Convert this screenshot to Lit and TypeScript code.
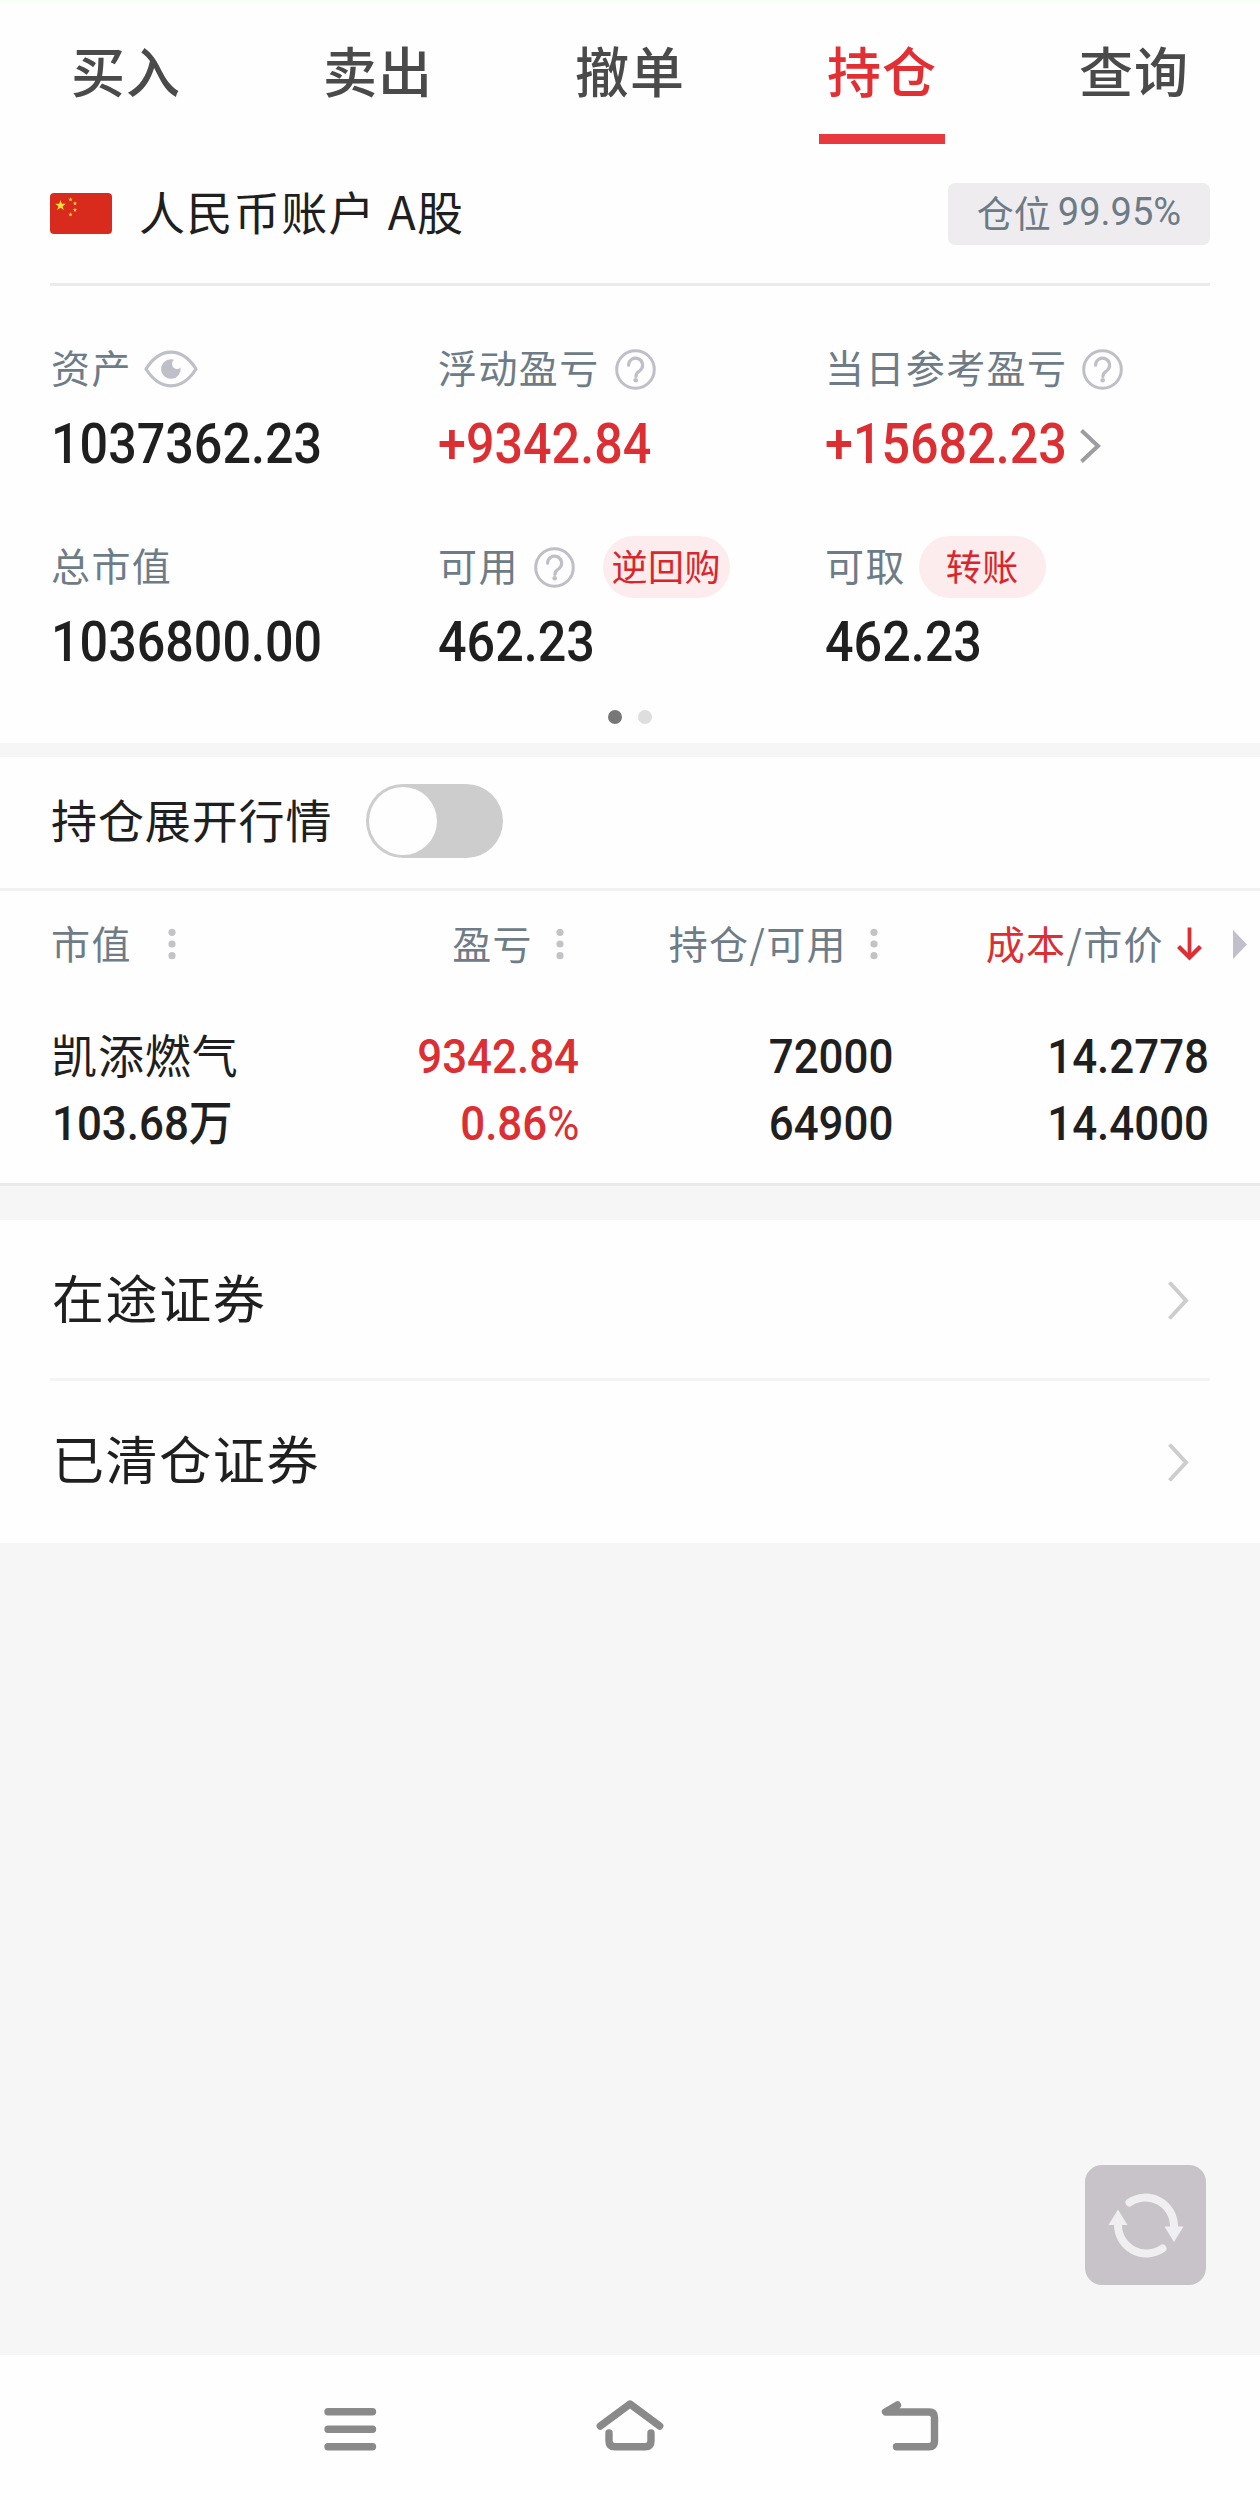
import { LitElement, html, css, svg, nothing } from "lit";
import { customElement, state } from "lit/decorators.js";
import { classMap } from "lit/directives/class-map.js";

interface Metric {
  label: string;
  value: string;
  tone?: "rise";
  eye?: boolean;
  help?: boolean;
  pill?: string;
  more?: boolean;
}

const TABS = ["买入", "卖出", "撤单", "持仓", "查询"];

const METRICS: Metric[] = [
  { label: "资产", value: "1037362.23", eye: true },
  { label: "浮动盈亏", value: "+9342.84", tone: "rise", help: true },
  { label: "当日参考盈亏", value: "+15682.23", tone: "rise", help: true, more: true },
  { label: "总市值", value: "1036800.00" },
  { label: "可用", value: "462.23", help: true, pill: "逆回购" },
  { label: "可取", value: "462.23", pill: "转账" },
];

const LINKS = ["在途证券", "已清仓证券"];

const star = (cx: number, cy: number, r: number) => {
  const pts: string[] = [];
  for (let i = 0; i < 10; i++) {
    const a = (Math.PI / 5) * i - Math.PI / 2;
    const k = i % 2 ? r * 0.4 : r;
    pts.push(`${(cx + k * Math.cos(a)).toFixed(2)},${(cy + k * Math.sin(a)).toFixed(2)}`);
  }
  return svg`<polygon points=${pts.join(" ")} fill="#fbe03a"/>`;
};

const flag = html`<svg class="flag" width="62" height="41" viewBox="0 0 62 41">
  <rect width="62" height="41" rx="4" fill="#d82b1e" />
  ${star(10.5, 12.5, 5.6)}${star(20.5, 6.5, 2.2)}${star(25, 10.5, 2.2)}${star(25, 17, 2.2)}${star(20.5, 21.5, 2.2)}
</svg>`;

const eye = html`<svg class="eye" width="54" height="38" viewBox="0 0 54 38">
  <path d="M2 19C9 8 17 2.2 27 2.2S45 8 52 19C45 30 37 35.8 27 35.8S9 30 2 19Z" fill="none" stroke="#bfbfca" stroke-width="3.2" stroke-linejoin="round" />
  <path d="M27 9.2a9.8 9.8 0 1 0 9.6 8.2a5 5 0 1 1-6.4-7.6A9.8 9.8 0 0 0 27 9.2Z" fill="#bfbfca" />
</svg>`;

const help = html`<svg class="help" width="41" height="41" viewBox="0 0 41 41" fill="none" stroke="#bfbfca" stroke-width="3">
  <circle cx="20.5" cy="20.5" r="18.8" />
  <path d="M13.6 16.2a7 7 0 1 1 11.6 5.2c-2.6 2.2-4.3 3-4.3 6" stroke-linecap="round" stroke-width="3.2" />
  <circle cx="20.7" cy="31.2" r="2.3" fill="#bfbfca" stroke="none" />
</svg>`;

const chevron = (color: string, w: number, h: number, sw: number) => html`<svg width=${w} height=${h} viewBox="0 0 ${w} ${h}" fill="none">
  <polyline points="1.5,1.5 ${w - 3},${h / 2} 1.5,${h - 1.5}" stroke=${color} stroke-width=${sw} />
</svg>`;

const kebab = html`<svg class="kebab" width="8" height="32" viewBox="0 0 8 32" fill="#c3c3c5">
  <circle cx="4" cy="4.3" r="3.6" /><circle cx="4" cy="16" r="3.6" /><circle cx="4" cy="27.7" r="3.6" />
</svg>`;

const arrowDown = html`<svg width="25" height="34" viewBox="0 0 25 34" fill="none" stroke="#dc2f33">
  <path d="M12.5 0.5V30" stroke-width="3.8" />
  <path d="M1.5 19.5L12.5 30.5L23.5 19.5" stroke-width="4.4" />
</svg>`;

const refresh = html`<svg width="76" height="66" viewBox="0 0 76 66">
  <g fill="none" stroke="#f0eef0" stroke-width="8" stroke-linecap="round">
    <path d="M21.5 10.5A28.5 28.5 0 0 1 66 33.5V36" />
    <path d="M54.5 56.5A28.5 28.5 0 0 1 10 32V29" />
  </g>
  <path d="M56.5 34.5H75.5L66 50Z" fill="#f0eef0" />
  <path d="M0.5 33H19.5L10 17.5Z" fill="#f0eef0" />
</svg>`;

@customElement("app-root")
export class AppRoot extends LitElement {
  @state() private active = 3;
  @state() private quotes = false;

  static styles = css`
    :host {
      display: block;
      width: 1260px;
      height: 2500px;
      font-family: "Noto Sans CJK SC", "Noto Sans", sans-serif;
      color: #1f1f1f;
      background: #f6f6f6;
    }
    * { box-sizing: border-box; }
    svg { display: block; flex: none; }
    .screen { position: relative; display: flex; flex-direction: column; height: 100%; white-space: nowrap; }
    .block { background: #fefefe; }

    .tabs { display: grid; grid-template-columns: repeat(5, 1fr); height: 144px; border-top: 3px solid #f7fdf7; }
    .tab { display: flex; flex-direction: column; align-items: center; justify-content: space-between; height: 141px; }
    .tab-text { height: 131px; line-height: 133px; font-size: 54px; font-weight: 500; letter-spacing: 1px; color: #4a4a4a; }
    .tab.on .tab-text { color: #e12f34; }
    .bar { width: 126px; height: 10px; }
    .tab.on .bar { background: #e8393e; }

    .account { display: flex; align-items: center; height: 142px; margin: 0 50px; border-bottom: 3px solid #ebebeb; }
    .account-name { flex: 1; margin-left: 27px; font-size: 46px; line-height: 66px; letter-spacing: 1.4px; padding-bottom: 8px; }
    .ratio { display: flex; align-items: center; justify-content: center; width: 262px; height: 62px; border-radius: 7px; background: #efecef; color: #6c7b85; font-size: 37px; gap: 7px; padding-bottom: 4px; }
    .ratio-num { font-family: Roboto, sans-serif; font-size: 38px; }

    .metrics { display: grid; grid-template-columns: 387px 387px 1fr; row-gap: 62px; padding: 52px 0 0 51px; }
    .label { display: flex; align-items: center; height: 62px; font-size: 39px; letter-spacing: 1.4px; color: #6e7c87; }
    .label-text { padding-bottom: 7px; }
    .eye { margin-left: 12px; }
    .help { margin-left: 15px; }
    .pill { display: flex; align-items: center; justify-content: center; width: 127px; height: 62px; border-radius: 31px; background: #fceced; color: #d9262c; font-size: 36px; letter-spacing: 0.6px; padding-bottom: 5px; margin-left: 13px; }
    .help + .pill { margin-left: 28px; }
    .value { display: flex; align-items: center; height: 60px; margin-top: 14px; }
    .num { font-family: Roboto, "Noto Sans CJK SC", sans-serif; font-weight: 500; transform: scaleX(0.914); }
    .value .num { font-size: 55px; line-height: 60px; transform-origin: left center; }
    .rise { color: #dc2f33; }
    .value svg { margin-left: -10px; margin-top: 3px; }
    .pager { display: flex; justify-content: center; gap: 16px; margin-top: 38px; height: 33px; }
    .dot { width: 14px; height: 14px; border-radius: 50%; background: #dedede; }
    .dot.on { background: #777; }

    .switch-row { display: flex; align-items: center; height: 134px; margin-top: 14px; padding: 0 51px 3px; border-bottom: 3px solid #f1f1f1; font-size: 46px; letter-spacing: 0.9px; }
    .switch-text { padding-bottom: 6px; }
    .toggle { width: 137px; height: 74px; margin-left: 34px; padding: 3px; border-radius: 37px; background: #cdcdcd; }
    .knob { width: 68px; height: 68px; border-radius: 50%; background: #fefefe; }

    .grid { display: grid; grid-template-columns: 249px 279px 314px 316px 51px; padding-left: 51px; }
    .head { height: 106px; align-items: center; font-size: 39px; letter-spacing: 1.4px; color: #6e7c87; }
    .th { display: flex; align-items: center; justify-content: flex-end; gap: 23px; padding-right: 15px; }
    .th-text { padding-bottom: 5px; }
    .th.first { justify-content: flex-start; gap: 36px; }
    .th.sorted { gap: 13px; padding-right: 7px; }
    .tri { margin-left: 24px; }
    .body { height: 189px; padding-top: 26px; grid-auto-rows: 67px; line-height: 67px; border-bottom: 3px solid #eaeaea; }
    .name { height: 63px; line-height: 61px; font-size: 46px; letter-spacing: 0.9px; }
    .td { display: flex; justify-content: flex-end; }
    .td .num { font-size: 48px; line-height: 67px; transform-origin: right center; }
    .td.left { justify-content: flex-start; padding-left: 1px; }
    .td.left .num { transform-origin: left center; }
    .wan { font-size: 48px; line-height: 60px; }
    .pct { font-weight: 400; }

    .links { margin-top: 34px; }
    .link { display: flex; align-items: center; justify-content: space-between; height: 158px; margin: 0 50px; padding: 0 21px 0 2px; font-size: 52px; letter-spacing: 1.6px; }
    .link + .link { border-top: 3px solid #f4f4f4; height: 165px; padding-bottom: 3px; }
    .link-text { padding-bottom: 6px; }
    .link svg { margin-top: 3px; }

    .refresh { position: absolute; left: 1085px; top: 2165px; width: 121px; height: 120px; border: 0; padding: 0; border-radius: 17px; background: #c8c3c9; display: flex; align-items: center; justify-content: center; }
    .nav { margin-top: auto; height: 145px; }
    .nav svg { width: 100%; }
  `;

  private metric(m: Metric) {
    return html`<div class="metric">
      <div class="label">
        <span class="label-text">${m.label}</span>
        ${m.eye ? eye : nothing}${m.help ? help : nothing}${m.pill ? html`<span class="pill">${m.pill}</span>` : nothing}
      </div>
      <div class="value">
        <span class=${classMap({ num: true, rise: m.tone === "rise" })}>${m.value}</span>
        ${m.more ? chevron("#9c9ca1", 21, 34, 4) : nothing}
      </div>
    </div>`;
  }

  render() {
    return html`<div class="screen">
      <div class="block">
        <nav class="tabs">
          ${TABS.map((t, i) => html`<div class=${classMap({ tab: true, on: i === this.active })} @click=${() => (this.active = i)}>
            <span class="tab-text">${t}</span><span class="bar"></span>
          </div>`)}
        </nav>
        <div class="account">
          ${flag}<span class="account-name">人民币账户 A股</span>
          <span class="ratio"><span>仓位</span><span class="ratio-num">99.95%</span></span>
        </div>
        <div class="metrics">${METRICS.map((m) => this.metric(m))}</div>
        <div class="pager"><span class="dot on"></span><span class="dot"></span></div>
      </div>

      <div class="block switch-row">
        <span class="switch-text">持仓展开行情</span>
        <div class="toggle" @click=${() => (this.quotes = !this.quotes)}><div class="knob"></div></div>
      </div>

      <div class="block grid head">
        <div class="th first"><span class="th-text">市值</span>${kebab}</div>
        <div class="th"><span class="th-text">盈亏</span>${kebab}</div>
        <div class="th"><span class="th-text">持仓/可用</span>${kebab}</div>
        <div class="th sorted"><span class="th-text"><span class="rise">成本</span>/市价</span>${arrowDown}</div>
        <svg class="tri" width="14" height="29" viewBox="0 0 14 29"><path d="M0 0L14 14.5L0 29Z" fill="#c1bfca" /></svg>
      </div>
      <div class="block grid body">
        <div class="name">凯添燃气</div>
        <div class="td rise"><span class="num">9342.84</span></div>
        <div class="td"><span class="num">72000</span></div>
        <div class="td"><span class="num">14.2778</span></div>
        <span></span>
        <div class="td left"><span class="num">103.68<span class="wan">万</span></span></div>
        <div class="td rise"><span class="num">0.86<span class="pct">%</span></span></div>
        <div class="td"><span class="num">64900</span></div>
        <div class="td"><span class="num">14.4000</span></div>
        <span></span>
      </div>

      <div class="block links">
        ${LINKS.map((l) => html`<div class="link"><span class="link-text">${l}</span>${chevron("#cdcdcd", 21, 39, 4)}</div>`)}
      </div>

      <button class="refresh">${refresh}</button>

      <div class="block nav">
        <svg width="1260" height="145" viewBox="0 0 1260 145" fill="none" stroke="#8a8a8a" stroke-width="7.4" stroke-linecap="round" stroke-linejoin="round">
          <path d="M328 56.8H372.5M328 74.3H372.5M328 91.8H372.5" />
          <path d="M600.3 71L630 49L659.7 71" />
          <path d="M609 78V86Q609 91.8 615 91.8H645Q651 91.8 651 86V78" />
          <path d="M897.5 50L885.5 57H929Q934.5 57 934.5 62.5V86.3Q934.5 91.8 929 91.8H896.5" />
        </svg>
      </div>
    </div>`;
  }
}
